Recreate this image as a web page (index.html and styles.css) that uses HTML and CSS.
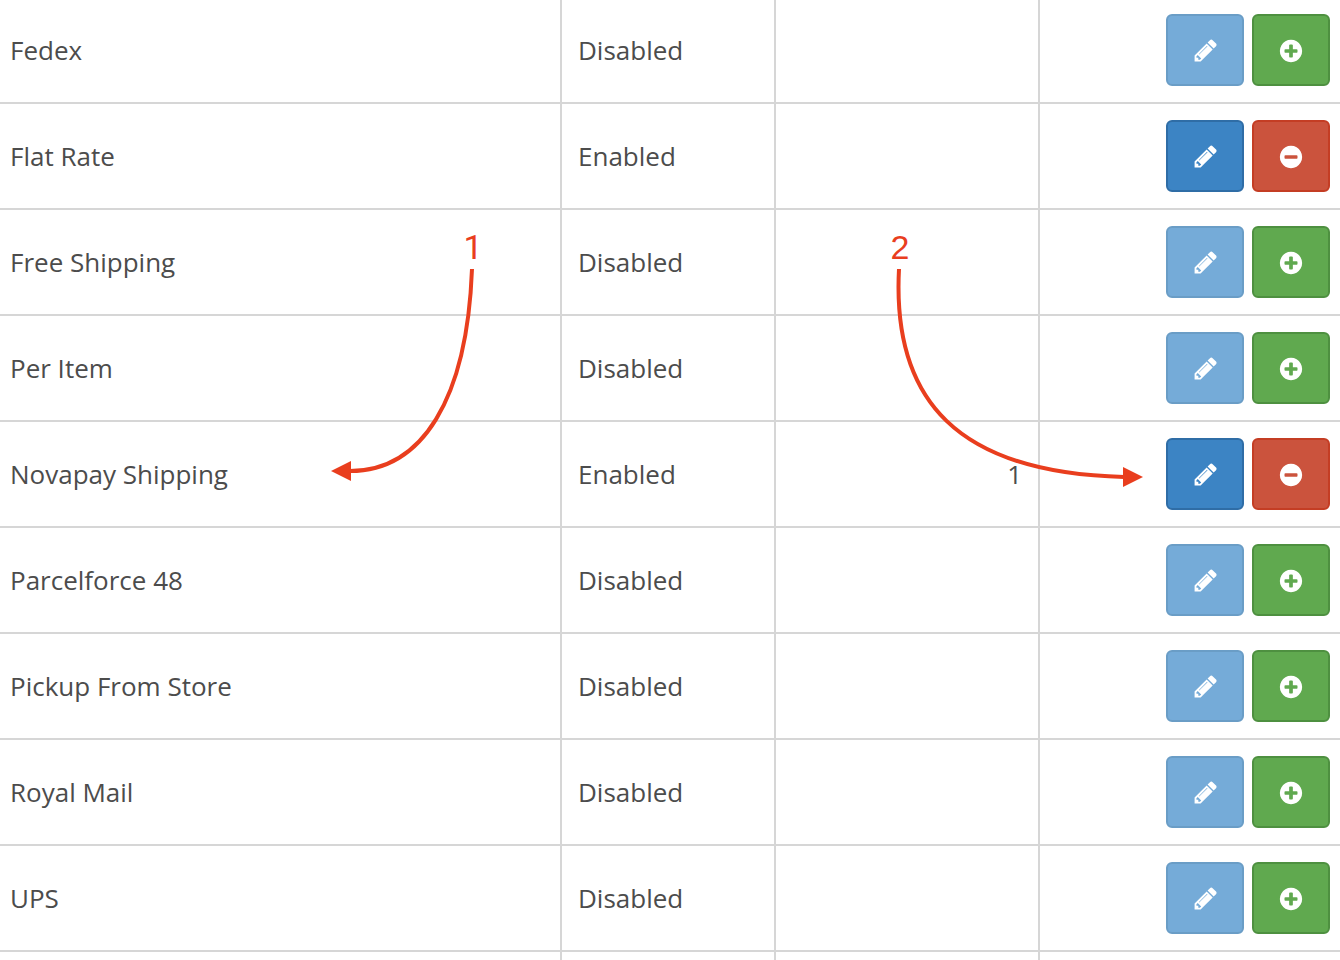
FILE: index.html
```html
<!DOCTYPE html>
<html lang="en">
<head>
<meta charset="utf-8">
<title>Shipping methods</title>
<link rel="stylesheet" href="styles.css">
<script src="rows.js" defer></script>
</head>
<body>
<svg class="sprite" aria-hidden="true">
  <symbol id="pencil" viewBox="-50 40 1792 1792"><path d="M491 1536l91-91-235-235-91 91v107h128v128h107zm523-928q0-22-22-22-10 0-17 7l-542 542q-7 7-7 17 0 22 22 22 10 0 17-7l542-542q7-7 7-17zm-54-192l416 416-832 832h-416v-416zm683 96q0 53-37 90l-166 166-416-416 166-165q36-38 90-38 53 0 91 38l235 234q37 39 37 91z"/></symbol>
  <symbol id="plus" viewBox="0 0 1792 1792"><path d="M1344 960v-128q0-26-19-45t-45-19h-256v-256q0-26-19-45t-45-19h-128q-26 0-45 19t-19 45v256h-256q-26 0-45 19t-19 45v128q0 26 19 45t45 19h256v256q0 26 19 45t45 19h128q26 0 45-19t19-45v-256h256q26 0 45-19t19-45zm320-64q0 209-103 385.5t-279.5 279.5-385.5 103-385.5-103-279.5-279.5-103-385.5 103-385.5 279.5-279.5 385.5-103 385.5 103 279.5 279.5 103 385.5z"/></symbol>
  <symbol id="minus" viewBox="0 0 1792 1792"><path d="M1344 960v-128q0-26-19-45t-45-19h-768q-26 0-45 19t-19 45v128q0 26 19 45t45 19h768q26 0 45-19t19-45zm320-64q0 209-103 385.5t-279.5 279.5-385.5 103-385.5-103-279.5-279.5-103-385.5 103-385.5 279.5-279.5 385.5-103 385.5 103 279.5 279.5 103 385.5z"/></symbol>
</svg>
<main class="page">
  <table class="methods">
    <colgroup><col><col class="col-status"><col class="col-order"><col class="col-action"></colgroup>
    <tbody id="rows"></tbody>
  </table>
  <svg class="notes" width="1340" height="960" viewBox="0 0 1340 960">
    <text class="note-label note-label-plain" x="473" y="259">1</text>
    <path class="note-line" d="M472 269C467 400 422 471 350 471"/>
    <path class="note-head" d="M331 471L351 461V481Z"/>
    <text class="note-label" x="900" y="259">2</text>
    <path class="note-line" d="M899 269C892 400 957 473 1124 477"/>
    <path class="note-head" d="M1143 477L1123 467V487Z"/>
  </svg>
</main>
</body>
</html>
```
FILE: styles.css
```css
* {
  box-sizing: border-box;
}

body {
  margin: 0;
  background: #fff;
  color: #4c4c4c;
  font-family: "Open Sans", sans-serif;
  font-size: 26px;
  line-height: 36px;
}

.sprite {
  display: none;
}

.page {
  position: relative;
  height: 100vh;
  overflow: hidden;
}

.methods {
  width: 100%;
  table-layout: fixed;
  border-collapse: separate;
  border-spacing: 0;
}

.col-status {
  width: 214px;
}

.col-order {
  width: 264px;
}

.col-action {
  width: 300px;
}

.methods td {
  padding: 16px;
  border-right: 2px solid #d6d6d6;
  border-bottom: 2px solid #d6d6d6;
  vertical-align: middle;
}

.methods tr:first-child td {
  padding-top: 14px;
}

.methods td:first-child {
  padding-left: 10px;
}

.methods td:last-child {
  padding-right: 10px;
  border-right: 0;
}

.methods .order {
  text-align: right;
}

.actions {
  display: flex;
  justify-content: flex-end;
  gap: 8px;
}

.btn {
  display: flex;
  align-items: center;
  justify-content: center;
  width: 78px;
  height: 72px;
  padding: 2px 0 0;
  border: 2px solid;
  border-radius: 6px;
  color: #fff;
}

.btn svg {
  width: 26px;
  height: 26px;
  fill: currentColor;
}

.btn-edit {
  background: #3c84c4;
  border-color: #2f6da6;
}

.btn-edit:disabled {
  background: #75abd8;
  border-color: #6a9dc6;
}

.btn-install {
  background: #60a94f;
  border-color: #4e9040;
}

.btn-uninstall {
  background: #cb533d;
  border-color: #c43d24;
}

.notes {
  position: absolute;
  top: 0;
  left: 0;
  pointer-events: none;
}

.note-label {
  fill: #e93e1e;
  font-family: "Liberation Sans", sans-serif;
  font-size: 34px;
  text-anchor: middle;
}

.note-label-plain {
  font-family: Roboto, sans-serif;
}

.note-line {
  fill: none;
  stroke: #e93e1e;
  stroke-width: 4;
}

.note-head {
  fill: #e93e1e;
}
```
FILE: rows.js
```js
const methods = [
  ["Fedex", false, ""],
  ["Flat Rate", true, ""],
  ["Free Shipping", false, ""],
  ["Per Item", false, ""],
  ["Novapay Shipping", true, "1"],
  ["Parcelforce 48", false, ""],
  ["Pickup From Store", false, ""],
  ["Royal Mail", false, ""],
  ["UPS", false, ""]
];

const rows = methods.map(([name, enabled, order]) => `
  <tr>
    <td>${name}</td>
    <td>${enabled ? "Enabled" : "Disabled"}</td>
    <td class="order">${order}</td>
    <td><div class="actions">
      <button class="btn btn-edit" type="button" aria-label="Edit ${name}"${enabled ? "" : " disabled"}><svg><use href="#pencil"/></svg></button>
      <button class="btn ${enabled ? "btn-uninstall" : "btn-install"}" type="button" aria-label="${enabled ? "Uninstall" : "Install"} ${name}"><svg><use href="#${enabled ? "minus" : "plus"}"/></svg></button>
    </div></td>
  </tr>`).join("");

document.getElementById("rows").innerHTML = rows + "<tr><td></td><td></td><td></td><td></td></tr>";
```
